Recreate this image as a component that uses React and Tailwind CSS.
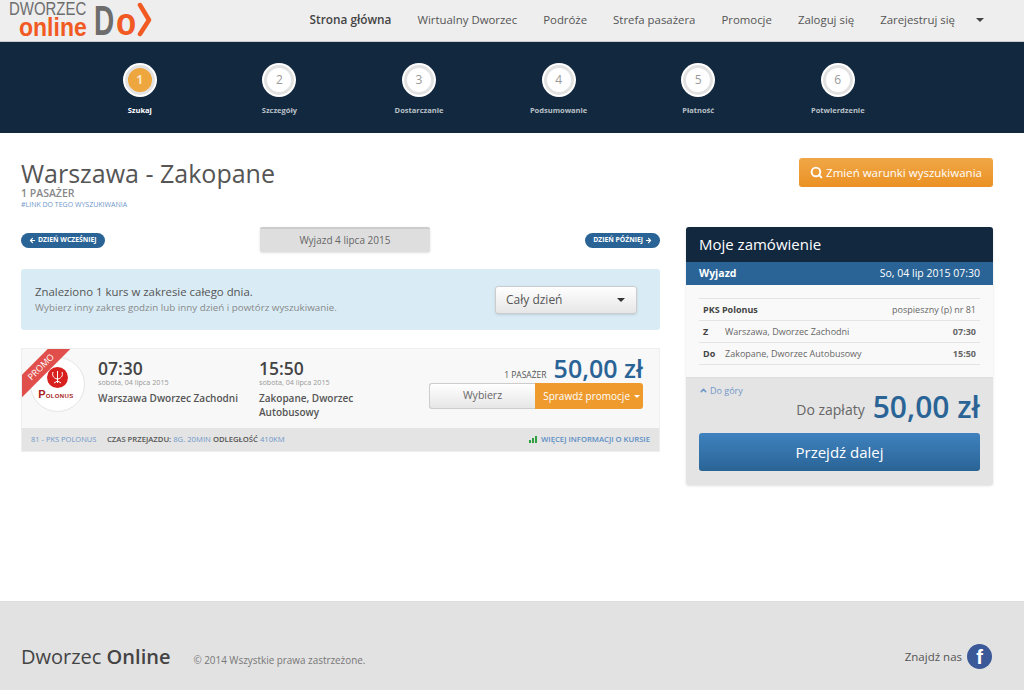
import React from 'react';
import { Search, ArrowLeft, ArrowRight, ChevronUp } from 'lucide-react';

const navItems = ['Strona główna', 'Wirtualny Dworzec', 'Podróże', 'Strefa pasażera', 'Promocje', 'Zaloguj się', 'Zarejestruj się'];
const steps = ['Szukaj', 'Szczegóły', 'Dostarczanie', 'Podsumowanie', 'Płatność', 'Potwierdzenie'];

const Caret = ({ className = '' }) => <span className={`inline-block w-0 h-0 border-x-[4px] border-x-transparent border-t-[4px] ${className}`} />;

const Logo = () => (
  <div className="flex items-start h-[41px] pl-[9px]">
    <div className="w-[85px] pt-[2px] font-['Liberation_Sans']">
      <div className="text-[18px] leading-[15px] text-[#6d6d6d] origin-left scale-x-[0.83] whitespace-nowrap">DWORZEC</div>
      <div className="ml-[10px] mt-[1px] text-[25px] leading-[19px] text-[#f15a22] font-bold origin-left scale-x-[0.92]">online</div>
    </div>
    <div className="w-[32px] -mr-[10px] font-['Liberation_Sans'] text-[43px] leading-[40px] font-bold text-[#6d6d6d] origin-left scale-x-[0.65]">D</div>
    <div className="w-[24px] -mr-[3px] mt-[4px] font-['Liberation_Sans'] text-[38px] leading-[36px] font-bold text-[#f15a22] origin-left scale-x-[0.87]">o</div>
    <svg width="15" height="35" viewBox="0 0 15 35" className="mt-[2px]">
      <path d="M3 3 L12 18 L3 32" fill="none" stroke="#f15a22" strokeWidth="4.5" strokeLinecap="round" strokeLinejoin="round" />
    </svg>
  </div>
);

const Step = ({ n, label, active }) => (
  <div className="w-[139.6px] flex flex-col items-center">
    <div className="w-[34px] h-[34px] rounded-full bg-white p-[2px]">
      <div className={`w-full h-full rounded-full border-[3px] border-[#e2e2e2] flex items-center justify-center text-[12px] ${active ? 'bg-[#eea63f] text-[#fbe7c3] font-bold' : 'bg-white text-[#999]'}`}>{n}</div>
    </div>
    <div className={`mt-[7px] text-[7.5px] leading-[12px] font-bold ${active ? 'text-white' : 'text-[#b9c0c7]'}`}>{label}</div>
  </div>
);

const DayButton = ({ children }) => (
  <a className="h-[15px] px-[8px] rounded-full bg-[#2a6496] text-white text-[6.8px] font-bold flex items-center gap-[2px] uppercase">{children}</a>
);

const OrderRow = ({ left, mid, right, rightClass = 'font-bold' }) => (
  <div className="h-[22px] border-t border-[#e4e4e4] flex items-center px-[4px] pt-[1px] text-[9px] text-[#666]">
    <span className="w-[22px] font-bold text-[#444]">{left}</span>
    <span className="flex-1">{mid}</span>
    <span className={rightClass}>{right}</span>
  </div>
);

const TimeCol = ({ time, place, className }) => (
  <div className={`pt-[11px] ${className}`}>
    <div className="text-[17.5px] leading-[17px] font-semibold text-[#444]">{time}</div>
    <div className="mt-[1px] text-[7.2px] leading-[9px] text-[#999]">sobota, 04 lipca 2015</div>
    <div className="mt-[4px] text-[10px] leading-[14px] font-semibold text-[#555]">{place}</div>
  </div>
);

export default function App() {
  return (
    <div className="w-[1024px] h-[690px] overflow-hidden bg-white flex flex-col font-['Open_Sans',sans-serif] text-[#555]">
      {/* Top bar */}
      <header className="h-[42px] bg-[#eeeeee] border-b border-[#ccc] flex items-start justify-between">
        <Logo />
        <nav className="flex items-center h-[39px] text-[11.4px] text-[#555] pr-[40px]">
          {navItems.map((item, i) => (
            <a key={item} className={`${i === navItems.length - 1 ? 'mr-[21px]' : 'mr-[26px]'} ${i === 0 ? 'text-[11.8px] font-semibold text-[#444]' : ''}`}>{item}</a>
          ))}
          <Caret className="border-t-[#444]" />
        </nav>
      </header>

      {/* Steps */}
      <div className="h-[91px] bg-[#12283f] flex justify-start pt-[21px] pl-[70px]">
        {steps.map((s, i) => <Step key={s} n={i + 1} label={s} active={i === 0} />)}
      </div>

      <main className="flex-1 pl-[21px] pr-[31px]">
        {/* Title */}
        <div className="flex justify-between items-start pt-[25px] h-[94px]">
          <div>
            <h1 className="text-[25px] leading-[30px] text-[#555]">Warszawa - Zakopane</h1>
            <div className="text-[10.5px] leading-[11px] font-semibold text-[#888]">1 PASAŻER</div>
            <div className="text-[7px] leading-[12px] text-[#6f97c9]">#LINK DO TEGO WYSZUKIWANIA</div>
          </div>
          <button className="h-[29px] w-[194px] bg-gradient-to-b from-[#f0a746] to-[#ea9122] rounded-[3px] text-white text-[11.5px] flex items-center justify-center gap-[3px]">
            <Search size={13} strokeWidth={3.5} />Zmień warunki wyszukiwania
          </button>
        </div>

        <div className="flex justify-between">
          {/* Left column */}
          <div className="w-[639px]">
            <div className="flex items-start justify-between h-[42px]">
              <div className="mt-[6px]"><DayButton><ArrowLeft size={7} strokeWidth={4} />Dzień wcześniej</DayButton></div>
              <div className="w-[170px] h-[25px] bg-[#dedede] border-t-2 border-[#ccc] rounded-[2px] shadow-sm flex items-center justify-center text-[10px] text-[#666]">Wyjazd 4 lipca 2015</div>
              <div className="mt-[6px]"><DayButton>Dzień później<ArrowRight size={7} strokeWidth={4} /></DayButton></div>
            </div>

            <div className="h-[61px] bg-[#d9ecf6] rounded-[3px] flex items-center justify-between pl-[14px] pr-[23px]">
              <div>
                <div className="text-[11.4px] leading-[16px] text-[#555]">Znaleziono 1 kurs w zakresie całego dnia.</div>
                <div className="text-[9.8px] leading-[15px] text-[#888]">Wybierz inny zakres godzin lub inny dzień i powtórz wyszukiwanie.</div>
              </div>
              <div className="w-[142px] h-[28px] rounded-[3px] border border-[#ccc] bg-gradient-to-b from-white to-[#e6e6e6] shadow-sm flex items-center justify-between pl-[10px] pr-[11px] text-[12px] text-[#555]">
                Cały dzień<Caret className="border-t-[#333]" />
              </div>
            </div>

            {/* Result */}
            <div className="relative mt-[18px] h-[104px] bg-[#f8f8f8] border border-[#eee] overflow-hidden">
              <div className="flex h-[81px]">
                <div className="w-[76px] pl-[8px] pt-[8px]">
                  <div className="w-[55px] h-[55px] rounded-full bg-white border border-[#e5e5e5] flex flex-col items-center pt-[9px]">
                    <svg width="21" height="21" viewBox="0 0 21 21">
                      <circle cx="10.5" cy="10.5" r="10.5" fill="#d8201e" />
                      <path d="M10.5 4v12M6 5c-1 3 0 6 4 7M15 5c1 3 0 6-4 7M7 16l3.500-2 3.500 2" fill="none" stroke="#fff" strokeWidth="1" />
                    </svg>
                    <div className="-ml-[3px] font-['Liberation_Sans'] font-bold text-[#a81c1c] leading-[9px] whitespace-nowrap">
                      <span className="text-[11px]">P</span><span className="text-[6px] tracking-[0.4px]">OLONUS</span>
                    </div>
                  </div>
                </div>
                <TimeCol time="07:30" place="Warszawa Dworzec Zachodni" className="w-[161px]" />
                <TimeCol time="15:50" place="Zakopane, Dworzec Autobusowy" className="w-[120px]" />
                <div className="flex-1 flex flex-col items-end pr-[16px] pt-[5px]">
                  <div className="flex items-end h-[29px]">
                    <span className="text-[8.5px] leading-[12px] text-[#555] mr-[7px] mb-[2px]">1 PASAŻER</span>
                    <span className="text-[25px] leading-[29px] font-semibold text-[#2a6496]">50,00 zł</span>
                  </div>
                  <div className="flex h-[26px] w-[214px] text-[10px]">
                    <div className="w-[106px] rounded-l-[3px] border border-[#ccc] border-r-0 bg-gradient-to-b from-white to-[#e6e6e6] flex items-center justify-center text-[10.5px] text-[#666]">Wybierz</div>
                    <div className="flex-1 rounded-r-[3px] bg-[#ee9a2c] text-white flex items-center justify-end pr-[3px] gap-[4px]">
                      Sprawdź promocje
                      <span className="inline-block w-0 h-0 border-x-[3px] border-x-transparent border-t-[3px] border-t-white" />
                    </div>
                  </div>
                </div>
              </div>
              <div className="absolute bottom-0 left-0 right-0 h-[23px] bg-[#e4e4e4] flex items-center justify-between pl-[9px] pr-[9px] text-[7.7px] uppercase">
                <div className="flex items-center">
                  <span className="text-[#6f97c9] text-[7.5px] w-[76px]">81 - PKS Polonus</span>
                  <span className="font-semibold text-[#555]">Czas przejazdu:</span>
                  <span className="text-[#6f97c9] ml-[2px] mr-[2px]">8g. 20min</span>
                  <span className="font-semibold text-[#555]">Odległość</span>
                  <span className="text-[#6f97c9] ml-[2px]">410km</span>
                </div>
                <div className="flex items-center gap-[3px] font-semibold text-[#5b8ec4]">
                  <svg width="9" height="8" viewBox="0 0 9 8"><rect x="0" y="5" width="2" height="3" fill="#2e9e3e" /><rect x="3" y="3" width="2" height="5" fill="#2e9e3e" /><rect x="6" y="1" width="2" height="7" fill="#2e9e3e" /></svg>
                  Więcej informacji o kursie
                </div>
              </div>
              {/* Promo ribbon */}
              <div className="absolute -left-[23px] top-[10px] w-[84px] h-[16px] -rotate-45 bg-[#e04f4b] text-white text-[9px] flex items-center justify-center">PROMO</div>
            </div>
          </div>

          {/* Order */}
          <aside className="w-[307px] h-[258px] rounded-[3px] bg-[#e4e4e4] overflow-hidden shadow-sm flex flex-col">
            <div className="h-[35px] bg-[#12283f] text-white text-[15px] flex items-center px-[13px] pb-[1px]">Moje zamówienie</div>
            <div className="h-[23px] bg-[#2a6496] text-white text-[10.5px] flex items-center justify-between px-[13px]">
              <span className="font-bold">Wyjazd</span><span>So, 04 lip 2015 07:30</span>
            </div>
            <div className="h-[93px] bg-[#f9f9f9] border-b border-[#ddd] px-[13px] pt-[13px]">
              <OrderRow left={<span className="whitespace-nowrap">PKS Polonus</span>} right="pospieszny (p) nr 81" rightClass="font-normal" />
              <OrderRow left="Z" mid="Warszawa, Dworzec Zachodni" right="07:30" />
              <div className="border-b border-[#e4e4e4]"><OrderRow left="Do" mid="Zakopane, Dworzec Autobusowy" right="15:50" /></div>
            </div>
            <div className="px-[13px] flex-1 relative">
              <a className="absolute left-[13px] top-[6px] flex items-center text-[9px] text-[#6f97c9] gap-[2px]"><ChevronUp size={9} strokeWidth={4} />Do góry</a>
              <div className="flex items-center justify-end h-[55px] pt-[2px]">
                <span className="text-[14px] text-[#666] mr-[8px] mt-[5px]">Do zapłaty</span>
                <span className="text-[30px] leading-[36px] font-semibold text-[#2a6496]">50,00 zł</span>
              </div>
              <button className="w-full h-[38px] rounded-[3px] bg-gradient-to-b from-[#3f82bf] to-[#2a6496] text-white text-[15px]">Przejdź dalej</button>
            </div>
          </aside>
        </div>
      </main>

      {/* Footer */}
      <footer className="h-[89px] bg-[#e2e2e2] border-t border-[#ddd] flex items-center justify-between pl-[21px] pr-[32px] pt-[21px]">
        <div className="flex items-baseline">
          <span className="text-[20px] text-[#444]">Dworzec <span className="font-semibold">Online</span></span>
          <span className="text-[9.9px] text-[#777] ml-[23px]">© 2014 Wszystkie prawa zastrzeżone.</span>
        </div>
        <div className="flex items-center gap-[5px] text-[11.5px] text-[#555]">
          Znajdź nas
          <span className="w-[25px] h-[25px] rounded-full bg-[#3b5998] text-white flex items-end justify-center overflow-hidden font-bold text-[20px] leading-[23px] font-['Liberation_Sans']">f</span>
        </div>
      </footer>
    </div>
  );
}
